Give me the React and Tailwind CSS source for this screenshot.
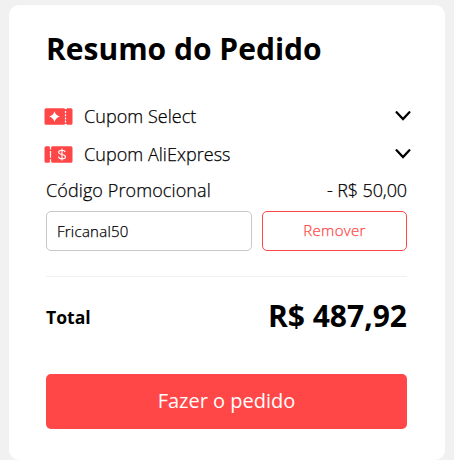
const COUPONS = Object.freeze([
  { id: 'select', label: 'Cupom Select', Icon: SelectCouponIcon },
  { id: 'aliexpress', label: 'Cupom AliExpress', Icon: StoreCouponIcon },
]);

function SelectCouponIcon() {
  return (
    <svg width="29" height="17" viewBox="0 0 29 17" fill="none" aria-hidden="true">
      <path
        d="M2 0.3H20.3Q20.8 1.3 21.7 1.3T23.1 0.3H27Q28.5 0.3 28.5 1.8V15.2Q28.5 16.7 27 16.7H23.1Q22.6 15.7 21.7 15.7T20.3 16.7H2Q0.5 16.7 0.5 15.2V1.8Q0.5 0.3 2 0.3Z"
        fill="#ff4747"
      />
      <path d="M10.5 3.2Q11.7 7.4 15.9 8.6Q11.7 9.8 10.5 14Q9.3 9.8 5.1 8.6Q9.3 7.4 10.5 3.2Z" fill="#fff" />
      <path d="M21.5 3V15" stroke="#fff" strokeWidth="1.2" strokeDasharray="2 1.2" />
    </svg>
  );
}

function StoreCouponIcon() {
  return (
    <svg width="29" height="17" viewBox="0 0 29 17" fill="none" aria-hidden="true">
      <path
        d="M2 0.3H5.3Q5.8 1.3 6.7 1.3T8.1 0.3H27Q28.5 0.3 28.5 1.8V15.2Q28.5 16.7 27 16.7H8.1Q7.6 15.7 6.7 15.7T5.3 16.7H2Q0.5 16.7 0.5 15.2V1.8Q0.5 0.3 2 0.3Z"
        fill="#ff4747"
      />
      <path d="M6.5 1V3.5M6.5 5V11.8M6.5 13.3V16" stroke="#fff" strokeWidth="1.2" />
      <path
        d="M18 2.4V14.6M21.3 6.1C20.9 4.8 19.6 4.2 18 4.2C16.1 4.2 14.6 4.9 14.6 6.3C14.6 9.2 21.5 7.7 21.5 10.7C21.5 12.1 19.9 12.8 18 12.8C16.2 12.8 14.7 12.1 14.4 10.7"
        stroke="#fff"
        strokeWidth="1.1"
      />
    </svg>
  );
}

function Chevron() {
  return (
    <svg width="16" height="10" viewBox="0 0 16 10" fill="none" aria-hidden="true">
      <path d="M1.6 1.3L8 8L14.4 1.3" stroke="#000" strokeWidth="2.3" strokeLinecap="round" />
    </svg>
  );
}

export default function App() {
  return (
    <div className="h-[460px] w-[454px] overflow-hidden bg-[#f1f1f1] pt-[5px] pr-[9px] pl-[9px] font-['Open_Sans',sans-serif] text-black">
      <section className="flex h-[455px] flex-col rounded-[10px] bg-white pr-[38px] pl-[37px]">
        <h1 className="mt-6 h-10 text-[30px] leading-10 font-bold whitespace-nowrap">Resumo do Pedido</h1>

        <div className="mt-7">
          {COUPONS.map(({ id, label, Icon }) => (
            <button
              key={id}
              type="button"
              className="-ml-0.5 flex h-[38px] w-[367px] items-center text-left"
            >
              <Icon />
              <span className="ml-[11px] flex-1 text-[18px] leading-6 font-light tracking-[0.04px] [-webkit-text-stroke:0.25px]">
                {label}
              </span>
              <Chevron />
            </button>
          ))}
        </div>

        <div className="-mt-px flex h-9 items-center justify-between text-[18px] font-light [-webkit-text-stroke:0.25px]">
          <span className="tracking-[0.1px]">Código Promocional</span>
          <span className="tracking-[-0.1px]">- R$ 50,00</span>
        </div>

        <div className="mt-[3px] flex gap-2.5">
          <input
            defaultValue="Fricanal50"
            className="h-10 w-[206px] rounded-[5px] border border-[#c8c8c8] px-2.5 text-[15px] font-light tracking-[0.25px] [-webkit-text-stroke:0.25px]"
          />
          <button
            type="button"
            className="h-10 w-[145px] rounded-[5px] border border-[#ff4747] pb-0.5 text-[15px] font-light tracking-[0.3px] text-[#ff4747] [-webkit-text-stroke:0.25px]"
          >
            Remover
          </button>
        </div>

        <hr className="mt-[25px] border-[#f0f0f0]" />

        <div className="mt-4 flex h-12 items-center justify-between font-bold">
          <span className="text-[17.6px]">Total</span>
          <span className="pb-[3px] text-[30px]">R$ 487,92</span>
        </div>

        <button type="button" className="mt-[33px] h-[55px] rounded-[5px] bg-[#ff4747] pb-0.5 text-[20px] text-white">
          Fazer o pedido
        </button>
      </section>
    </div>
  );
}
